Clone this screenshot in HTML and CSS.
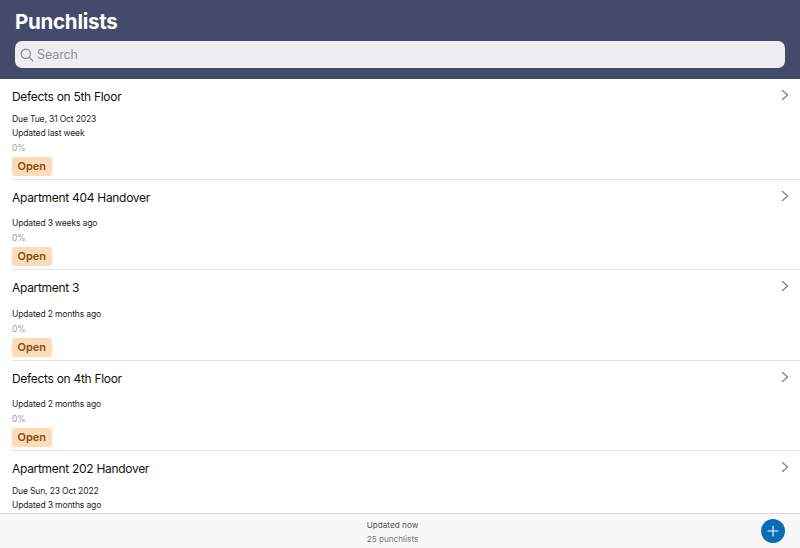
FILE: index.html
```html
<!DOCTYPE html>
<html lang="en">
<head>
<meta charset="utf-8">
<title>Punchlists</title>
<link rel="stylesheet" href="styles.css">
</head>
<body>
<div class="app">
  <header class="header">
    <h1 class="title">Punchlists</h1>
    <div class="search">
      <svg class="search-icon" width="14" height="14" viewBox="0 0 14 14" fill="none" stroke="#8a8a8e" stroke-width="1.2" stroke-linecap="round"><circle cx="5.8" cy="5.8" r="4.6"/><path d="M9.2 9.2 13 13"/></svg>
      <span class="search-text">Search</span>
    </div>
  </header>
  <main class="list">
    <article class="item item-due">
      <div class="item-head"><h2 class="name">Defects on 5th Floor</h2><svg class="chev" width="8" height="12" viewBox="0 0 8 12" fill="none" stroke="#85858a" stroke-width="1.4" stroke-linecap="round" stroke-linejoin="round"><path d="M1.5 1.5 6.5 6 1.5 10.5"/></svg></div>
      <p class="meta meta-first">Due Tue, 31 Oct 2023</p>
      <p class="meta">Updated last week</p>
      <p class="pct">0%</p>
      <span class="badge">Open</span>
    </article>
    <article class="item">
      <div class="item-head"><h2 class="name">Apartment 404 Handover</h2><svg class="chev" width="8" height="12" viewBox="0 0 8 12" fill="none" stroke="#85858a" stroke-width="1.4" stroke-linecap="round" stroke-linejoin="round"><path d="M1.5 1.5 6.5 6 1.5 10.5"/></svg></div>
      <p class="meta meta-first">Updated 3 weeks ago</p>
      <p class="pct">0%</p>
      <span class="badge">Open</span>
    </article>
    <article class="item">
      <div class="item-head"><h2 class="name">Apartment 3</h2><svg class="chev" width="8" height="12" viewBox="0 0 8 12" fill="none" stroke="#85858a" stroke-width="1.4" stroke-linecap="round" stroke-linejoin="round"><path d="M1.5 1.5 6.5 6 1.5 10.5"/></svg></div>
      <p class="meta meta-first">Updated 2 months ago</p>
      <p class="pct">0%</p>
      <span class="badge">Open</span>
    </article>
    <article class="item">
      <div class="item-head"><h2 class="name">Defects on 4th Floor</h2><svg class="chev" width="8" height="12" viewBox="0 0 8 12" fill="none" stroke="#85858a" stroke-width="1.4" stroke-linecap="round" stroke-linejoin="round"><path d="M1.5 1.5 6.5 6 1.5 10.5"/></svg></div>
      <p class="meta meta-first">Updated 2 months ago</p>
      <p class="pct">0%</p>
      <span class="badge">Open</span>
    </article>
    <article class="item item-due">
      <div class="item-head"><h2 class="name">Apartment 202 Handover</h2><svg class="chev" width="8" height="12" viewBox="0 0 8 12" fill="none" stroke="#85858a" stroke-width="1.4" stroke-linecap="round" stroke-linejoin="round"><path d="M1.5 1.5 6.5 6 1.5 10.5"/></svg></div>
      <p class="meta meta-first">Due Sun, 23 Oct 2022</p>
      <p class="meta">Updated 3 months ago</p>
    </article>
  </main>
  <footer class="footer">
    <div class="status">
      <span class="status-main">Updated now</span>
      <span class="status-sub">25 punchlists</span>
    </div>
    <button class="add" aria-label="Add"><svg width="12" height="12" viewBox="0 0 12 12" stroke="#fff" stroke-width="1.1" stroke-linecap="round"><path d="M6 1v10M1 6h10"/></svg></button>
  </footer>
</div>
</body>
</html>
```
FILE: styles.css
```css
* { box-sizing: border-box; }
html, body { margin: 0; height: 100%; }
body { font-family: Inter, "Liberation Sans", sans-serif; background: #fff; color: #000; overflow: hidden; }
.app { display: flex; flex-direction: column; height: 548px; }
.header { flex: none; height: 79px; background: #444a6b; padding: 10px 15px 0; }
.title { margin: 0; height: 24px; font-size: 20.5px; letter-spacing: -0.25px; line-height: 24px; font-weight: 700; color: #fff; }
.search { display: flex; align-items: center; gap: 3px; height: 27px; margin-top: 7px; padding-left: 5px; background: #eeeef0; border-radius: 7px; }
.search-icon { flex: none; }
.search-text { font-size: 12.5px; letter-spacing: -0.1px; color: #8f8f94; }
.list { flex: 1; min-height: 0; overflow: hidden; }
.item { display: flex; flex-direction: column; align-items: flex-start; margin-left: 12px; padding-top: 10px; padding-bottom: 3px; border-bottom: 1px solid #e3e3e5; }
.item-head { display: flex; justify-content: space-between; align-items: flex-start; align-self: stretch; height: 15px; padding-right: 11px; }
.name { margin: 0; font-size: 12px; letter-spacing: -0.3px; line-height: 15px; font-weight: 400; color: #111; }
.chev { margin-top: 0; }
.meta { margin: 0; font-size: 8.5px; letter-spacing: -0.13px; line-height: 14px; color: #1c1c1e; }
.meta-first { margin-top: 11.5px; }
.item-due { padding-bottom: 2.5px; }
.item-due .meta-first { margin-top: 7.5px; }
.pct { margin: 1px 0 0; font-size: 8.5px; line-height: 14px; color: #9c9c9c; }
.badge { display: block; margin-top: 2px; padding: 0 5.5px; height: 19px; line-height: 19px; border-radius: 3px; background: #fadcb8; color: #8a4b10; font-size: 11px; font-weight: 600; }
.item-due .badge { margin-top: 2.5px; }
.footer { flex: none; position: relative; display: flex; justify-content: center; align-items: center; height: 35px; padding-right: 15px; padding-top: 1px; background: #f7f7f8; border-top: 1px solid #dcdcde; }
.status { display: flex; flex-direction: column; align-items: center; gap: 2px; }
.status-main { font-size: 8.2px; line-height: 12px; color: #555; }
.status-sub { font-size: 8.2px; line-height: 12px; color: #777; }
.add { position: absolute; right: 15px; top: 5px; display: flex; align-items: center; justify-content: center; width: 24px; height: 24px; padding: 0; border: none; border-radius: 50%; background: #0b6cb5; }
```
